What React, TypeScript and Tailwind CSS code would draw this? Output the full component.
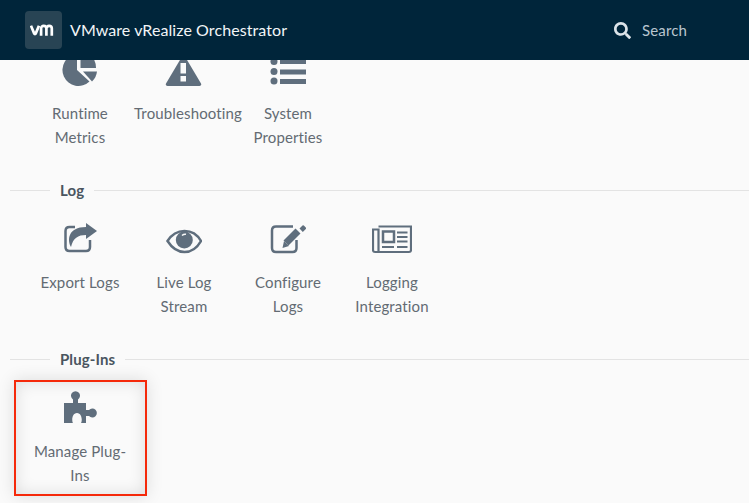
import React from 'react'
import { FaSearch } from 'react-icons/fa'

type IconProps = { className?: string }
const BG = '#fafafa'

const PieIcon = ({ className = '' }: IconProps) => (
  <svg viewBox="60 51 40 36" className={className} fill="currentColor">
    <path d="M77 54A16 16 0 1 0 89.500 81.500L77 70Z" />
    <path d="M80.500 50A18 18 0 0 1 96 68H80.500Z" />
    <path d="M83 71.500H97A16 16 0 0 1 92 81.500Z" />
  </svg>
)

const WarningIcon = ({ className = '' }: IconProps) => (
  <svg viewBox="165 51 40 36" className={className} fill="currentColor">
    <path d="M184.500 54L202 83.500Q202.800 86 200.500 86H168.500Q166.200 86 167 83.500Z" />
    <rect x="181.500" y="63" width="5.500" height="10.500" fill={BG} />
    <rect x="181.500" y="76" width="5.500" height="5.500" fill={BG} />
  </svg>
)

const ListIcon = ({ className = '' }: IconProps) => (
  <svg viewBox="270 51 36 36" className={className} fill="currentColor">
    <circle cx="274" cy="61.500" r="3.500" />
    <circle cx="274" cy="71.500" r="3.500" />
    <circle cx="274" cy="81" r="3.500" />
    <rect x="280" y="59" width="26" height="5" />
    <rect x="280" y="69.500" width="26" height="5" />
    <rect x="280" y="79" width="26" height="5" />
  </svg>
)

const ExportIcon = ({ className = '' }: IconProps) => (
  <svg viewBox="62 220 36 36" className={className} fill="none" stroke="currentColor">
    <path d="M75 227H69.500Q65.500 227 65.500 231V247Q65.500 251 69.500 251H86Q90 251 90 247V240" strokeWidth="2.500" />
    <path d="M86 223L97 231L86 239V235C78 235 73 238 71 247C67 240 68 227 86 227Z" fill="currentColor" stroke="none" />
  </svg>
)

const EyeIcon = ({ className = '' }: IconProps) => (
  <svg viewBox="166 220 36 36" className={className} fill="none" stroke="currentColor">
    <path d="M167.500 241C172 234 178 231 184.500 231S197 234 201 241C197 248 191 252 184.500 252S172 248 167.500 241Z" strokeWidth="2.500" />
    <circle cx="184.300" cy="240" r="8.500" fill="currentColor" stroke="none" />
    <path d="M182 235.500Q184 233.800 186 234.300" stroke={BG} strokeWidth="1.500" />
  </svg>
)

const EditIcon = ({ className = '' }: IconProps) => (
  <svg viewBox="270 220 36 36" className={className} fill="none" stroke="currentColor">
    <path d="M293 226.500H276Q272 226.500 272 230.500V248Q272 252 276 252H292.500Q296.500 252 296.500 248V240" strokeWidth="2.500" />
    <path d="M286 243L298 231" strokeWidth="7" />
    <path d="M282.500 248L284 241L289 246Z" fill="currentColor" stroke="none" />
    <path d="M299.500 228.500L302.500 225.500Q303 225 303.800 225.500L306 227.700Q306.400 228.400 305.800 229L302.800 232Z" fill="currentColor" stroke="none" />
  </svg>
)

const NewsIcon = ({ className = '' }: IconProps) => (
  <svg viewBox="372 220 40 36" className={className} fill="none" stroke="currentColor">
    <path d="M378.500 226.500H411V250Q411 252 409 252H375Q373 252 373 250V229.500H378.500V252" strokeWidth="2.200" />
    <rect x="383" y="231.500" width="11" height="10.500" strokeWidth="2.500" />
    <path d="M397 232.500H407.500M397 237H407.500M397 241.500H407.500M382 247H394M397 247H407.500" strokeWidth="2" />
  </svg>
)

const PuzzleIcon = ({ className = '' }: IconProps) => (
  <svg viewBox="64 391 34 33" className={className} fill="currentColor">
    <path d="M64 403H73V399.500A4.500 4.500 0 1 1 78 399.500V403H86V410H89A4.500 4.500 0 1 1 89 416H86V423H81C82.500 421 82 413 77 413C72 413 71.500 421 73 423H64Z" />
  </svg>
)

const VmLogo = () => (
  <svg viewBox="0 0 28 12" className="w-[27px] h-[12px]" fill="none" stroke="#ffffff" strokeWidth="2.800">
    <path d="M1 1.500 4.300 9.500c.4.900 1.300.9 1.700 0L9.300 1.500" />
    <path d="M11.500 12V4.500C11.500 2.800 12.500 1.800 14.200 1.800S17 2.800 17 4.500V12M17 4.500C17 2.800 18.200 1.800 19.800 1.800S22.600 2.800 22.600 4.500V12" />
  </svg>
)

const Section = ({ title, children }: { title: string; children: React.ReactNode }) => (
  <section>
    <div className="flex items-center h-6 pl-2.5">
      <div className="w-10 h-px bg-[#e3e3e3]" />
      <h2 className="px-2.5 text-[15px] tracking-[0.1px] font-bold text-[#4a5560]">{title}</h2>
      <div className="flex-1 h-px bg-[#e3e3e3]" />
    </div>
    <div className="flex pl-7">{children}</div>
  </section>
)

const Tile = ({ icon, label, labelClass = '', highlighted }: { icon: React.ReactNode; label: React.ReactNode; labelClass?: string; highlighted?: boolean }) => (
  <div className="relative shrink-0 w-[104px] flex flex-col items-center text-center pt-[18px] pb-[29px]">
    {highlighted && (
      <div className="absolute left-[-14px] top-[9px] w-[133px] h-[116px] border-2 border-[#f5290a] shadow-[0_0_16px_rgba(0,0,0,0.12),inset_0_0_16px_rgba(0,0,0,0.12)]" />
    )}
    <div className="h-9 flex items-center justify-center text-[#5f6e7d]">{icon}</div>
    <div className={`mt-[14px] text-[15px] tracking-[0.13px] leading-6 text-[#636b73] whitespace-nowrap ${labelClass}`}>{label}</div>
  </div>
)

export default function App() {
  return (
    <div className="h-[503px] w-[749px] flex flex-col overflow-hidden bg-[#fafafa] font-['Lato','Open_Sans',sans-serif]">
      {/* Header */}
      <header className="h-[60px] shrink-0 bg-[#00253a] flex items-center pl-[25px] pr-[62px]">
        <div className="w-[37px] h-[38px] rounded-sm bg-[#284454] flex items-center justify-center">
          <VmLogo />
        </div>
        <span className="ml-2 text-[16px] tracking-[0.08px] text-[#f2f5f7]">VMware vRealize Orchestrator</span>
        <div className="ml-auto flex items-center gap-[11px]">
          <FaSearch className="w-[17px] h-[17px] text-[#dbe3e8]" />
          <span className="text-[15px] tracking-[0.13px] text-[#b9c6cf]">Search</span>
        </div>
      </header>

      {/* Content, scrolled */}
      <main className="flex-1 overflow-hidden">
        <div className="mt-[-27px]">
          <div className="flex pl-7">
            <Tile icon={<PieIcon className="w-10 h-9" />} label={<>Runtime<br />Metrics</>} />
            <Tile icon={<WarningIcon className="w-10 h-9" />} label="Troubleshooting" labelClass="ml-2" />
            <Tile icon={<ListIcon className="w-9 h-9" />} label={<>System<br />Properties</>} />
          </div>
          <Section title="Log">
            <Tile icon={<ExportIcon className="w-9 h-9" />} label={<>Export Logs<br />&nbsp;</>} />
            <Tile icon={<EyeIcon className="w-9 h-9" />} label={<>Live Log<br />Stream</>} />
            <Tile icon={<EditIcon className="w-9 h-9" />} label={<>Configure<br />Logs</>} />
            <Tile icon={<NewsIcon className="w-10 h-9" />} label={<>Logging<br />Integration</>} />
          </Section>
          <Section title="Plug-Ins">
            <Tile highlighted icon={<PuzzleIcon className="w-[34px] h-[33px] ml-[2px] mt-[1px]" />} label={<>Manage Plug-<br />Ins</>} />
          </Section>
        </div>
      </main>
    </div>
  )
}
